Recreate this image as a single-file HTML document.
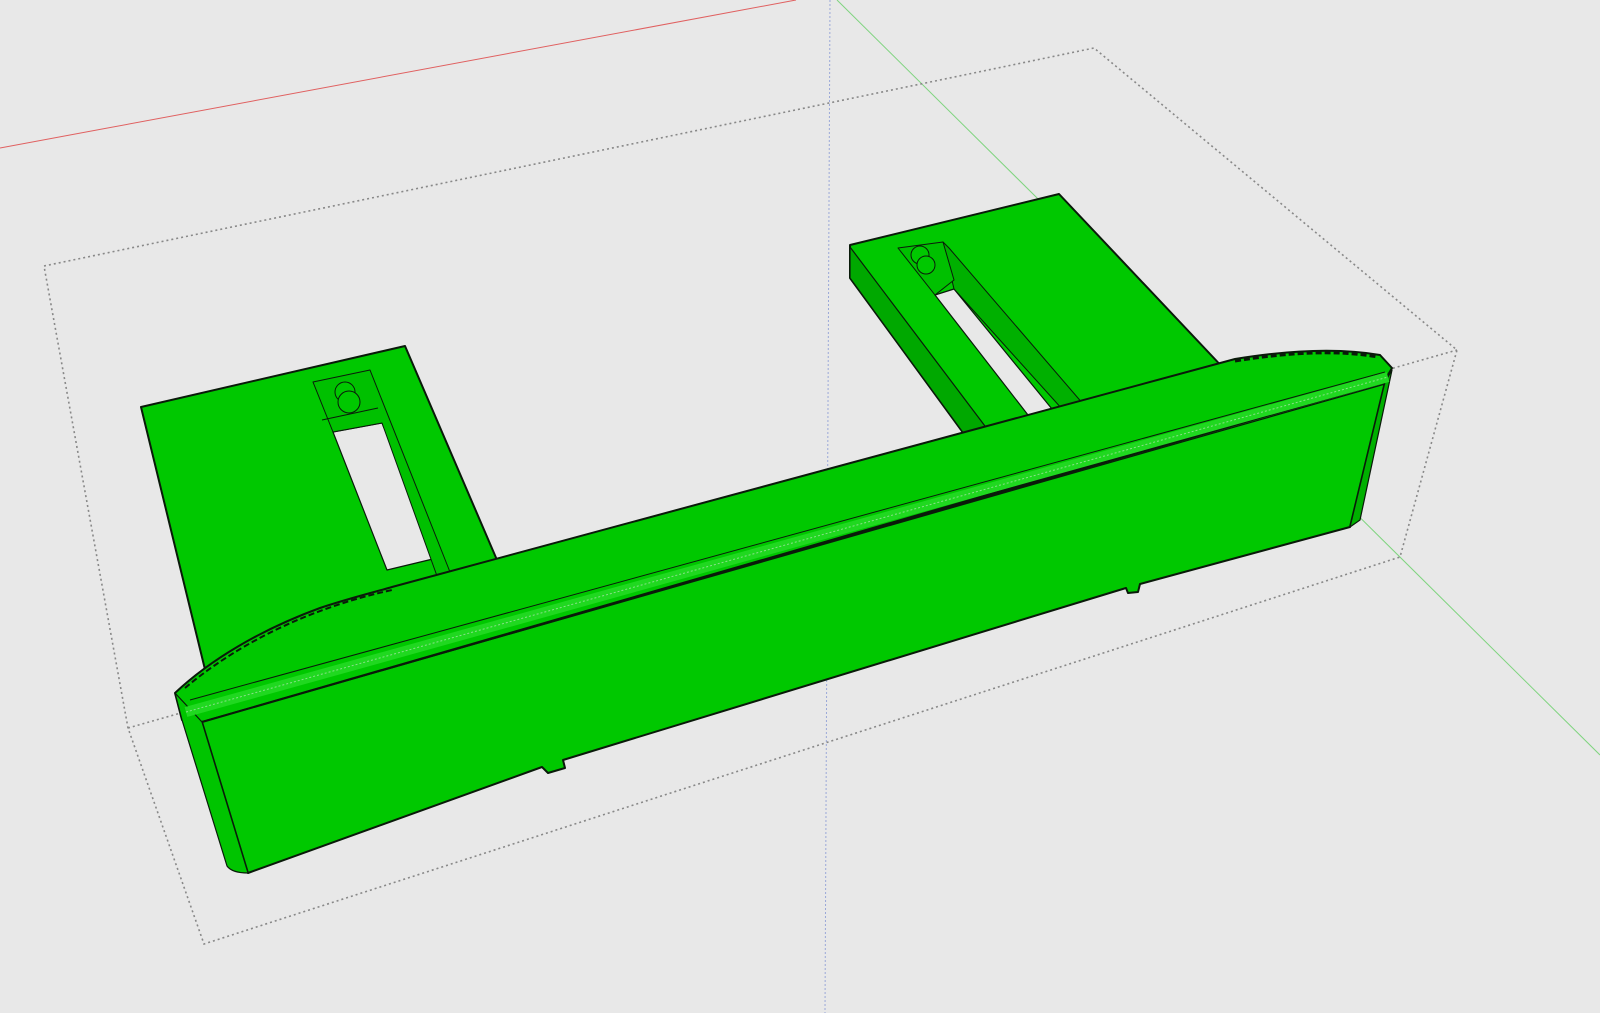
<!DOCTYPE html>
<html><head><meta charset="utf-8"><style>
html,body{margin:0;padding:0;background:#e8e8e8;width:1600px;height:1013px;overflow:hidden}
svg{display:block}
</style></head><body>
<svg width="1600" height="1013" viewBox="0 0 1600 1013" xmlns="http://www.w3.org/2000/svg">
<rect width="1600" height="1013" fill="#e8e8e8"/>
<line x1="0" y1="148" x2="796" y2="0" stroke="#e06060" stroke-width="1"/>
<line x1="837" y1="0" x2="1600" y2="755" stroke="#7fd47f" stroke-width="1"/>
<line x1="830" y1="0" x2="825" y2="1013" stroke="#9aa8d8" stroke-width="1" stroke-dasharray="2,2"/>
<g fill="none" stroke="#888" stroke-width="1.6" stroke-dasharray="2,3">
<polyline points="44,266 1094,48 1457,350 1400,557 204,944 128,728 44,266"/>
<line x1="128" y1="728" x2="1457" y2="350"/>
</g>
<g stroke="#0a1a0a" stroke-width="1.5" stroke-linejoin="round">
<polygon points="141,407 405,346 497,560 210,690" fill="#00c800" stroke-width="2"/>
<polygon points="333,432 382,423 437,558 387,570" fill="#e8e8e8" stroke-width="1.2"/>
<polygon points="313,382 370,370 450,572 437,576 382,423 333,432" fill="#00c000" stroke-width="1"/>
<line x1="322" y1="420" x2="378" y2="408" stroke-width="1"/>
<circle cx="345" cy="392" r="10" fill="#00c800" stroke-width="1"/>
<circle cx="349" cy="402" r="11" fill="#00c800" stroke-width="1"/>
<polygon points="850,245 1059,194 1228,373 997,442 975,449 850,278" fill="#00c800" stroke-width="2"/>
<polygon points="850,247 850,278 975,449 997,442" fill="#00a800" stroke-width="1.2"/>
<polygon points="935,295 954,289 1052,409 1028,415" fill="#e8e8e8" stroke-width="1.2"/>
<polygon points="943,242 949,248 1090,412 1072,420 954,289" fill="#00b000" stroke-width="1"/>
<polygon points="898,248 943,242 954,280 935,295" fill="#00c000" stroke-width="1"/>
<circle cx="920" cy="255" r="9" fill="#00c800" stroke-width="1"/>
<circle cx="926" cy="265" r="9" fill="#00c800" stroke-width="1"/>
<path d="M175,693 C210,660 260,630 320,608 C350,598 375,592 392,587 L1235,359 C1290,350 1340,348 1380,355 L1392,368 L1385,380 L202,722 L182,720 Z" fill="#00c800" stroke-width="2"/>
<path d="M185,688 C230,650 300,610 392,590" fill="none" stroke="#0a1a0a" stroke-width="2" stroke-dasharray="6,3"/>
<path d="M1235,361 C1290,352 1340,350 1378,357" fill="none" stroke="#0a1a0a" stroke-width="3" stroke-dasharray="6,3"/>
<line x1="190" y1="700" x2="1385" y2="372" stroke-width="1"/>
<polygon points="202,722 1385,382 1350,527 1140,584 1138,592 1128,593 1126,588 563,760 565,768 548,773 542,767 248,873" fill="#00c800" stroke-width="2"/>
<polygon points="1385,382 1392,370 1360,520 1350,527" fill="#00b000" stroke-width="1.2"/>
<path d="M175,693 L182,720 L227,866 Q232,873 248,873 L202,722 Z" fill="#00c400" stroke-width="1.2"/>
<line x1="186" y1="712" x2="1388" y2="377" stroke="#20d820" stroke-width="10"/>
<line x1="186" y1="712" x2="1388" y2="377" stroke="#8ae08a" stroke-width="1" stroke-dasharray="2,2"/>
<line x1="202" y1="722" x2="1385" y2="384" stroke-width="1.2"/>
</g>
</svg>
</body></html>
